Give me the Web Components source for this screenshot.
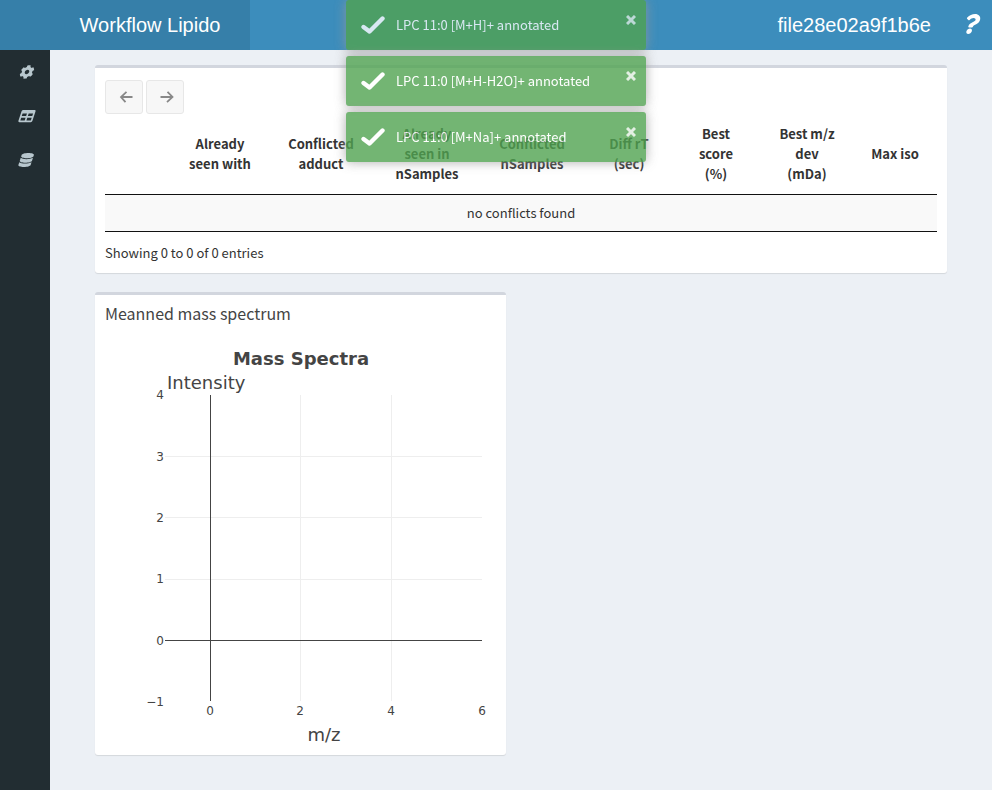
<!DOCTYPE html>
<html lang="en">
<head>
<meta charset="utf-8">
<title>Workflow Lipido</title>
<style>
  body { margin: 0; background: #ecf0f5; color: #333; font: 13px/20px "Noto Sans CJK SC", sans-serif; }
</style>
</head>
<body>
<lipido-app></lipido-app>

<template id="app">
  <style>
    :host { display: flex; flex-direction: column; min-height: 100vh; }
    .body { display: flex; flex: 1; }
    main { flex: 1; min-width: 0; padding: 15px 45px; }
    .row { display: grid; grid-template-columns: 1fr 1fr; gap: 30px; margin-top: 19px; }
    h3 { margin: 0; font-size: 16px; font-weight: 400; line-height: 16px; color: #444; }
  </style>
  <app-header file="file28e02a9f1b6e">Workflow Lipido</app-header>
  <div class="body">
    <side-nav></side-nav>
    <main>
      <box-card><conflict-table></conflict-table></box-card>
      <div class="row">
        <box-card><h3>Meanned mass spectrum</h3><mass-plot></mass-plot></box-card>
      </div>
    </main>
  </div>
  <toast-stack>
    <toast-message>LPC 11:0 [M+H]+ annotated</toast-message>
    <toast-message>LPC 11:0 [M+H-H2O]+ annotated</toast-message>
    <toast-message>LPC 11:0 [M+Na]+ annotated</toast-message>
  </toast-stack>
</template>

<template id="header">
  <style>
    :host { display: flex; height: 50px; background: #3c8dbc; color: #fff; font: 20px/50px "Liberation Sans", sans-serif; }
    .logo { width: 200px; padding-left: 50px; background: #367fa9; text-align: center; color: inherit; text-decoration: none; }
    .right { margin-left: auto; display: flex; align-items: center; gap: 33px; padding-right: 13px; }
    button { display: flex; border: 0; padding: 0 0 3px; background: none; color: inherit; }
  </style>
  <a class="logo" href="#"><slot></slot></a>
  <div class="right">
    <span id="file"></span>
    <button aria-label="Help"><fa-icon name="question" style="--size:20px"></fa-icon></button>
  </div>
</template>

<template id="nav">
  <style>
    :host { display: block; width: 50px; background: #222d32; }
    nav { display: flex; flex-direction: column; }
    a { display: flex; height: 44px; align-items: center; justify-content: center; padding-left: 3px; color: #b8c7ce; }
  </style>
  <nav>
    <a href="#settings" aria-label="Settings"><fa-icon name="cog"></fa-icon></a>
    <a href="#table" aria-label="Table"><fa-icon name="table"></fa-icon></a>
    <a href="#database" aria-label="Database"><fa-icon name="database"></fa-icon></a>
  </nav>
</template>

<template id="card">
  <style>
    :host { display: block; background: #fff; border-top: 3px solid #d2d6de; border-radius: 3px; box-shadow: 0 1px 1px rgba(0,0,0,.1); padding: 10px; }
  </style>
  <slot></slot>
</template>

<template id="conflicts">
  <style>
    :host { display: block; }
    .buttons { display: flex; gap: 3px; padding-top: 2px; }
    button { width: 38px; height: 34px; padding: 0 0 0 3px; border: 1px solid #e7e7e7; border-radius: 3px; background: #f7f7f7; color: #888; display: flex; align-items: center; justify-content: center; }
    table { width: 100%; table-layout: fixed; border-collapse: separate; border-spacing: 0; border-bottom: 1px solid #111; }
    th { padding: 10px 0; border-bottom: 1px solid #111; font-weight: 700; line-height: 20px; }
    td { padding: 8px; background: #f9f9f9; text-align: center; }
    p { margin: 0; padding: 11px 0 0; line-height: 20px; }
  </style>
  <div class="buttons">
    <button aria-label="Previous"><svg width="14" height="14" viewBox="0 0 14 14" fill="none" stroke="currentColor" stroke-width="1.8"><path d="M13.500 7H2M7.500 1.800L2 7l4.500 5.200"/></svg></button>
    <button aria-label="Next"><svg width="14" height="14" viewBox="0 0 14 14" fill="none" stroke="currentColor" stroke-width="1.8"><path d="M.5 7H12M7.500 1.800L12.500 7L7 12.200"/></svg></button>
  </div>
  <table>
    <colgroup><col style="width:70px"><col style="width:90px"><col style="width:112px"><col style="width:100px"><col style="width:110px"><col style="width:84px"><col style="width:90px"><col style="width:92px"><col style="width:84px"></colgroup>
    <thead><tr>
      <th></th><th>Already<br>seen with</th><th>Conflicted<br>adduct</th><th>Already<br>seen in<br>nSamples</th><th>Conflicted<br>nSamples</th><th>Diff rT<br>(sec)</th><th>Best<br>score<br>(%)</th><th>Best m/z<br>dev<br>(mDa)</th><th>Max iso</th>
    </tr></thead>
    <tbody><tr><td colspan="9">no conflicts found</td></tr></tbody>
  </table>
  <p>Showing 0 to 0 of 0 entries</p>
</template>

<template id="plot">
  <style>
    :host { display: block; padding-top: 14px; }
    svg { display: block; width: 100%; }
    text { font-family: "DejaVu Sans", sans-serif; font-size: 12px; fill: #444; }
    .t { font-size: 18px; }
    .b { font-weight: 700; }
    .m { text-anchor: middle; }
    .e { text-anchor: end; }
  </style>
  <svg viewBox="0 0 391 410" role="img" aria-label="Mass Spectra">
    <g stroke="#eee" shape-rendering="crispEdges">
      <path d="M195.500 60V366M286.500 60V366M60 121.500H377M60 182.500H377M60 244.500H377"/>
      <path stroke="#444" d="M60 305.500H377M105.500 60V366"/>
    </g>
    <text class="t b m" x="196" y="30">Mass Spectra</text>
    <text class="t" x="62" y="54">Intensity</text>
    <text class="e" x="59" y="64">4</text>
    <text class="e" x="59" y="126">3</text>
    <text class="e" x="59" y="187">2</text>
    <text class="e" x="59" y="248">1</text>
    <text class="e" x="59" y="310">0</text>
    <text class="e" x="59" y="371">−1</text>
    <text class="m" x="105" y="380">0</text>
    <text class="m" x="195" y="380">2</text>
    <text class="m" x="286" y="380">4</text>
    <text class="m" x="377" y="380">6</text>
    <text class="t m" x="219" y="406">m/z</text>
  </svg>
</template>

<template id="stack">
  <style>
    :host { position: fixed; top: 0; left: 0; right: 0; display: flex; flex-direction: column; align-items: center; gap: 6px; pointer-events: none; }
  </style>
  <slot></slot>
</template>

<template id="toast">
  <style>
    :host { display: flex; box-sizing: border-box; width: 300px; max-width: 100%; padding: 15px 10px 15px 15px; border-radius: 3px; background: #51a351; color: #fff; box-shadow: 0 0 12px #999; opacity: .8; pointer-events: auto; }
    .check { width: 24px; height: 20px; margin-right: 11px; }
    span { flex: 1; }
    button { align-self: flex-start; display: flex; padding: 0; border: 0; background: none; color: #fff; opacity: .8; }
  </style>
  <svg class="check" viewBox="0 0 24 20" fill="none" stroke="currentColor" stroke-width="4.400" stroke-linecap="round" stroke-linejoin="round"><path d="M2.500 12L8.500 16.500L21.500 3.500"/></svg>
  <span><slot></slot></span>
  <button aria-label="Close"><svg width="10" height="10" viewBox="0 0 10 10" fill="none" stroke="currentColor" stroke-width="3"><path d="M1 1l8 8M9 1L1 9"/></svg></button>
</template>

<script>
const ICONS = {
  cog: [512, "M487.4 315.7l-42.6-24.6c4.3-23.2 4.3-47 0-70.2l42.6-24.6c4.9-2.8 7.1-8.6 5.5-14-11.1-35.6-30-67.8-54.7-94.6-3.8-4.1-10-5.1-14.8-2.3L380.8 110c-17.9-15.4-38.5-27.3-60.8-35.1V25.8c0-5.6-3.9-10.5-9.4-11.7-36.7-8.2-74.3-7.8-109.2 0-5.5 1.2-9.4 6.1-9.4 11.7V75c-22.2 7.9-42.8 19.8-60.8 35.1L88.7 85.5c-4.9-2.8-11-1.9-14.8 2.3-24.7 26.7-43.6 58.9-54.7 94.6-1.7 5.4.6 11.2 5.5 14L67.300 221c-4.3 23.2-4.3 47 0 70.2l-42.6 24.6c-4.9 2.8-7.1 8.6-5.5 14 11.1 35.6 30 67.8 54.7 94.6 3.8 4.1 10 5.1 14.8 2.3l42.6-24.6c17.9 15.4 38.5 27.3 60.8 35.1v49.2c0 5.6 3.9 10.5 9.4 11.7 36.7 8.2 74.3 7.8 109.2 0 5.5-1.2 9.4-6.1 9.4-11.7v-49.2c22.2-7.9 42.8-19.8 60.8-35.1l42.6 24.6c4.9 2.8 11 1.9 14.8-2.3 24.7-26.7 43.6-58.9 54.7-94.6 1.5-5.5-.7-11.3-5.6-14.1zM256 336c-44.1 0-80-35.9-80-80s35.9-80 80-80 80 35.9 80 80-35.9 80-80 80z"],
  table: [512, "M464 32H48C21.490 32 0 53.490 0 80v352c0 26.510 21.490 48 48 48h416c26.510 0 48-21.490 48-48V80c0-26.510-21.490-48-48-48zM224 416H64v-96h160v96zm0-160H64v-96h160v96zm224 160H288v-96h160v96zm0-160H288v-96h160v96z"],
  database: [448, "M448 73v46c0 40-100 73-224 73S0 159 0 119V73C0 33 100 0 224 0s224 33 224 73zM448 176v103c0 40-100 73-224 73S0 319 0 279V176c48 33 136 49 224 49s176-16 224-49zm0 160v103c0 40-100 73-224 73S0 479 0 439V336c48 33 136 49 224 49s176-16 224-49z"],
  question: [384, "M202 0C122 0 70.500 33 30 91c-7.400 10.600-5 25 5 33l43 32.700c10.400 7.900 25 6 33.300-4.100 25-31.400 43.600-49.500 82.800-49.500 30.700 0 68.800 19.800 68.800 49.600 0 22.600-18.600 34.100-49 51.200-35.400 19.900-82.300 44.600-82.300 106.400V320c0 13.300 10.700 24 24 24h72.500c13.300 0 24-10.700 24-24v-5.800c0-42.900 125.300-44.600 125.300-160.600C377.500 66.300 286.900 0 202 0zM192 373.500c-38.200 0-69.300 31-69.300 69.200s31.100 69.300 69.300 69.300 69.300-31.100 69.300-69.300-31.100-69.200-69.300-69.200z"]
};

const define = (tag, id, setup) => customElements.define(tag, class extends HTMLElement {
  connectedCallback() {
    if (this.shadowRoot) return;
    const root = this.attachShadow({ mode: "open" });
    root.append(document.getElementById(id).content.cloneNode(true));
    if (setup) setup(this, root);
  }
});

customElements.define("fa-icon", class extends HTMLElement {
  connectedCallback() {
    if (this.shadowRoot) return;
    const [w, d] = ICONS[this.getAttribute("name")];
    this.attachShadow({ mode: "open" }).innerHTML =
      `<style>:host{display:inline-flex}svg{display:block;height:var(--size,14px);overflow:visible;transform:skewX(-18deg)}</style>
       <svg viewBox="0 0 ${w} 512" fill="currentColor" aria-hidden="true"><path d="${d}"/></svg>`;
  }
});
define("app-header", "header", (el, root) => { root.getElementById("file").textContent = el.getAttribute("file"); });
define("side-nav", "nav");
define("box-card", "card");
define("conflict-table", "conflicts");
define("mass-plot", "plot");
define("toast-stack", "stack");
define("toast-message", "toast", (el, root) => {
  root.querySelector("button").addEventListener("click", () => el.remove());
});
define("lipido-app", "app");
</script>
</body>
</html>
